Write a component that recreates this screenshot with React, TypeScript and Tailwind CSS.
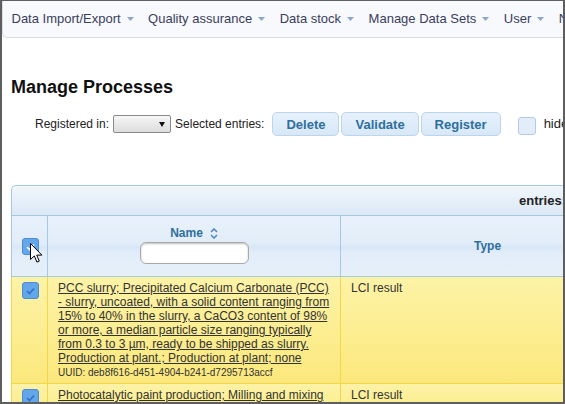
import React from "react";

const navItems = ["Data Import/Export", "Quality assurance", "Data stock", "Manage Data Sets", "User", "Network"];

function Caret() {
  return (
    <svg width="7" height="4" viewBox="0 0 7 4" className="shrink-0 ml-[6px]">
      <path d="M0 0h7L3.5 4z" fill="#8fa6c4" />
    </svg>
  );
}

function CheckBox({ white }: { white?: boolean }) {
  return (
    <div className="w-[17px] h-[17px] rounded-[3px] border border-[#4a8dd6] bg-[#63a6e9] flex items-center justify-center">
      <svg width="11" height="9" viewBox="0 0 11 9">
        <path d="M2 5l2.5 2.5L9 2.5" stroke={white ? "#ffffff" : "#2f72c6"} strokeWidth="1.6" fill="none" />
      </svg>
    </div>
  );
}

function Cursor() {
  return (
    <svg width="13" height="20" viewBox="0 0 13 20" className="absolute left-[18px] top-[27px]">
      <path d="M0.5 0.5v16l3.8-3.6 2.6 6.2 2.4-1-2.6-6h5.2z" fill="#ffffff" stroke="#000000" strokeWidth="1" strokeLinejoin="round" />
    </svg>
  );
}

function Button({ label }: { label: string }) {
  return (
    <button className="shrink-0 h-[24px] px-[13px] rounded-[5px] border border-[#bcd5ec] bg-[linear-gradient(#e6f1fc,#d8e8f8)] text-[13px] font-bold text-[#2e6e9e] leading-none">
      {label}
    </button>
  );
}

export default function App() {
  return (
    <div className="w-[565px] h-[404px] overflow-hidden bg-white border-l-2 border-r-2 border-b-2 border-t border-[#5e5e5e] font-['Liberation_Sans',Arial,sans-serif] text-[12px] text-[#333]">
      {/* Top menu */}
      <div className="h-[37px] flex items-center gap-[14.5px] pl-[8.5px] bg-[#f7f9fc] border-b border-l border-[#d9dde3] rounded-bl-[5px] whitespace-nowrap overflow-hidden text-[13px] text-[#3a3d5c]">
        {navItems.map((label) => (
          <div key={label} className="shrink-0 flex items-center">
            <span>{label}</span>
            <Caret />
          </div>
        ))}
      </div>

      <div className="pl-[9px]">
        <h1 className="mt-[39px] text-[18px] leading-[21px] font-bold text-[#111]">Manage Processes</h1>

        {/* Toolbar */}
        <div className="mt-[14px] h-[24px] pl-[24px] flex items-center whitespace-nowrap text-[#222]">
          <span className="shrink-0">Registered in:</span>
          <div className="shrink-0 ml-[4px] w-[58px] h-[18px] rounded-[2px] border border-[#8a8a8a] bg-[linear-gradient(#f6f6f6,#dddddd)] flex items-center justify-end pr-[5px]">
            <svg width="6" height="5" viewBox="0 0 6 5">
              <path d="M0 0h6L3 5z" fill="#111" />
            </svg>
          </div>
          <span className="shrink-0 ml-[4px]">Selected entries:</span>
          <div className="shrink-0 ml-[8px] flex gap-[2px]">
            <Button label="Delete" />
            <Button label="Validate" />
            <Button label="Register" />
          </div>
          <div className="shrink-0 ml-[17px] mt-[3px] w-[18px] h-[18px] rounded-[3px] border border-[#b3cbe4] bg-[#e3edf9]" />
          <span className="shrink-0 ml-[8px] text-[13px]">hide</span>
        </div>

        {/* Table */}
        <div className="mt-[49px] w-[700px]">
          <div className="h-[31px] border-t border-l border-b border-[#a6c9e2] rounded-tl-[5px] bg-[linear-gradient(#f1f7fd,#dbe8f5)] flex items-center pl-[507px] whitespace-nowrap font-bold text-[13px] text-[#222]">
            entries: 1 - 10 of 54
          </div>

          <div className="h-[61px] flex border-l border-b border-[#a6c9e2] bg-[linear-gradient(#e8f1fb_0%,#e2edf9_45%,#d8e7f7_52%,#e2edf9_62%,#e6f0fb_100%)]">
            <div className="relative w-[36px] shrink-0 border-r border-[#a6c9e2] pl-[10px] pt-[22px]">
              <CheckBox white />
              <Cursor />
            </div>
            <div className="w-[293px] shrink-0 border-r border-[#a6c9e2] flex flex-col items-center pt-[10px]">
              <div className="flex items-center leading-[14px] font-bold text-[#2e6e9e]">
                <span>Name</span>
                <svg width="8" height="11" viewBox="0 0 8 11" className="ml-[7px]">
                  <path d="M1 4l3-3 3 3M1 7l3 3 3-3" stroke="#4f86bb" strokeWidth="1.5" fill="none" />
                </svg>
              </div>
              <input className="mt-[2px] w-[109px] h-[22px] rounded-[6px] border border-[#a9a9a9] bg-white shadow-[inset_0_1px_2px_rgba(0,0,0,0.25)]" />
            </div>
            <div className="w-[293px] shrink-0 flex items-center justify-center font-bold text-[#2e6e9e]">Type</div>
          </div>

          <div className="h-[107px] flex border-l border-b border-[#f3d64a] bg-[linear-gradient(#fdf3a7,#fbe87c)]">
            <div className="w-[36px] shrink-0 border-r border-[#f3d64a] pl-[10px] pt-[5px]">
              <CheckBox />
            </div>
            <div className="w-[293px] shrink-0 border-r border-[#f3d64a] pl-[10px] pt-[4px] whitespace-nowrap">
              <a className="underline leading-[14px] block text-[#333]">
                PCC slurry; Precipitated Calcium Carbonate (PCC)
                <br />- slurry, uncoated, with a solid content ranging from
                <br />15% to 40% in the slurry, a CaCO3 content of 98%
                <br />or more, a median particle size ranging typically
                <br />from 0.3 to 3 µm, ready to be shipped as slurry.
                <br />Production at plant.; Production at plant; none
              </a>
              <div className="text-[10px] leading-[16px]">UUID: deb8f616-d451-4904-b241-d7295713accf</div>
            </div>
            <div className="w-[293px] shrink-0 pl-[10px] pt-[4px] leading-[14px]">LCI result</div>
          </div>

          <div className="h-[40px] flex border-l border-[#f3d64a] bg-[linear-gradient(#fdf3a7,#fbe87c)]">
            <div className="w-[36px] shrink-0 border-r border-[#f3d64a] pl-[10px] pt-[5px]">
              <CheckBox />
            </div>
            <div className="w-[293px] shrink-0 border-r border-[#f3d64a] pl-[10px] pt-[4px] whitespace-nowrap">
              <a className="underline leading-[14px] block text-[#333]">Photocatalytic paint production; Milling and mixing</a>
            </div>
            <div className="w-[293px] shrink-0 pl-[10px] pt-[4px] leading-[14px]">LCI result</div>
          </div>
        </div>
      </div>
    </div>
  );
}
